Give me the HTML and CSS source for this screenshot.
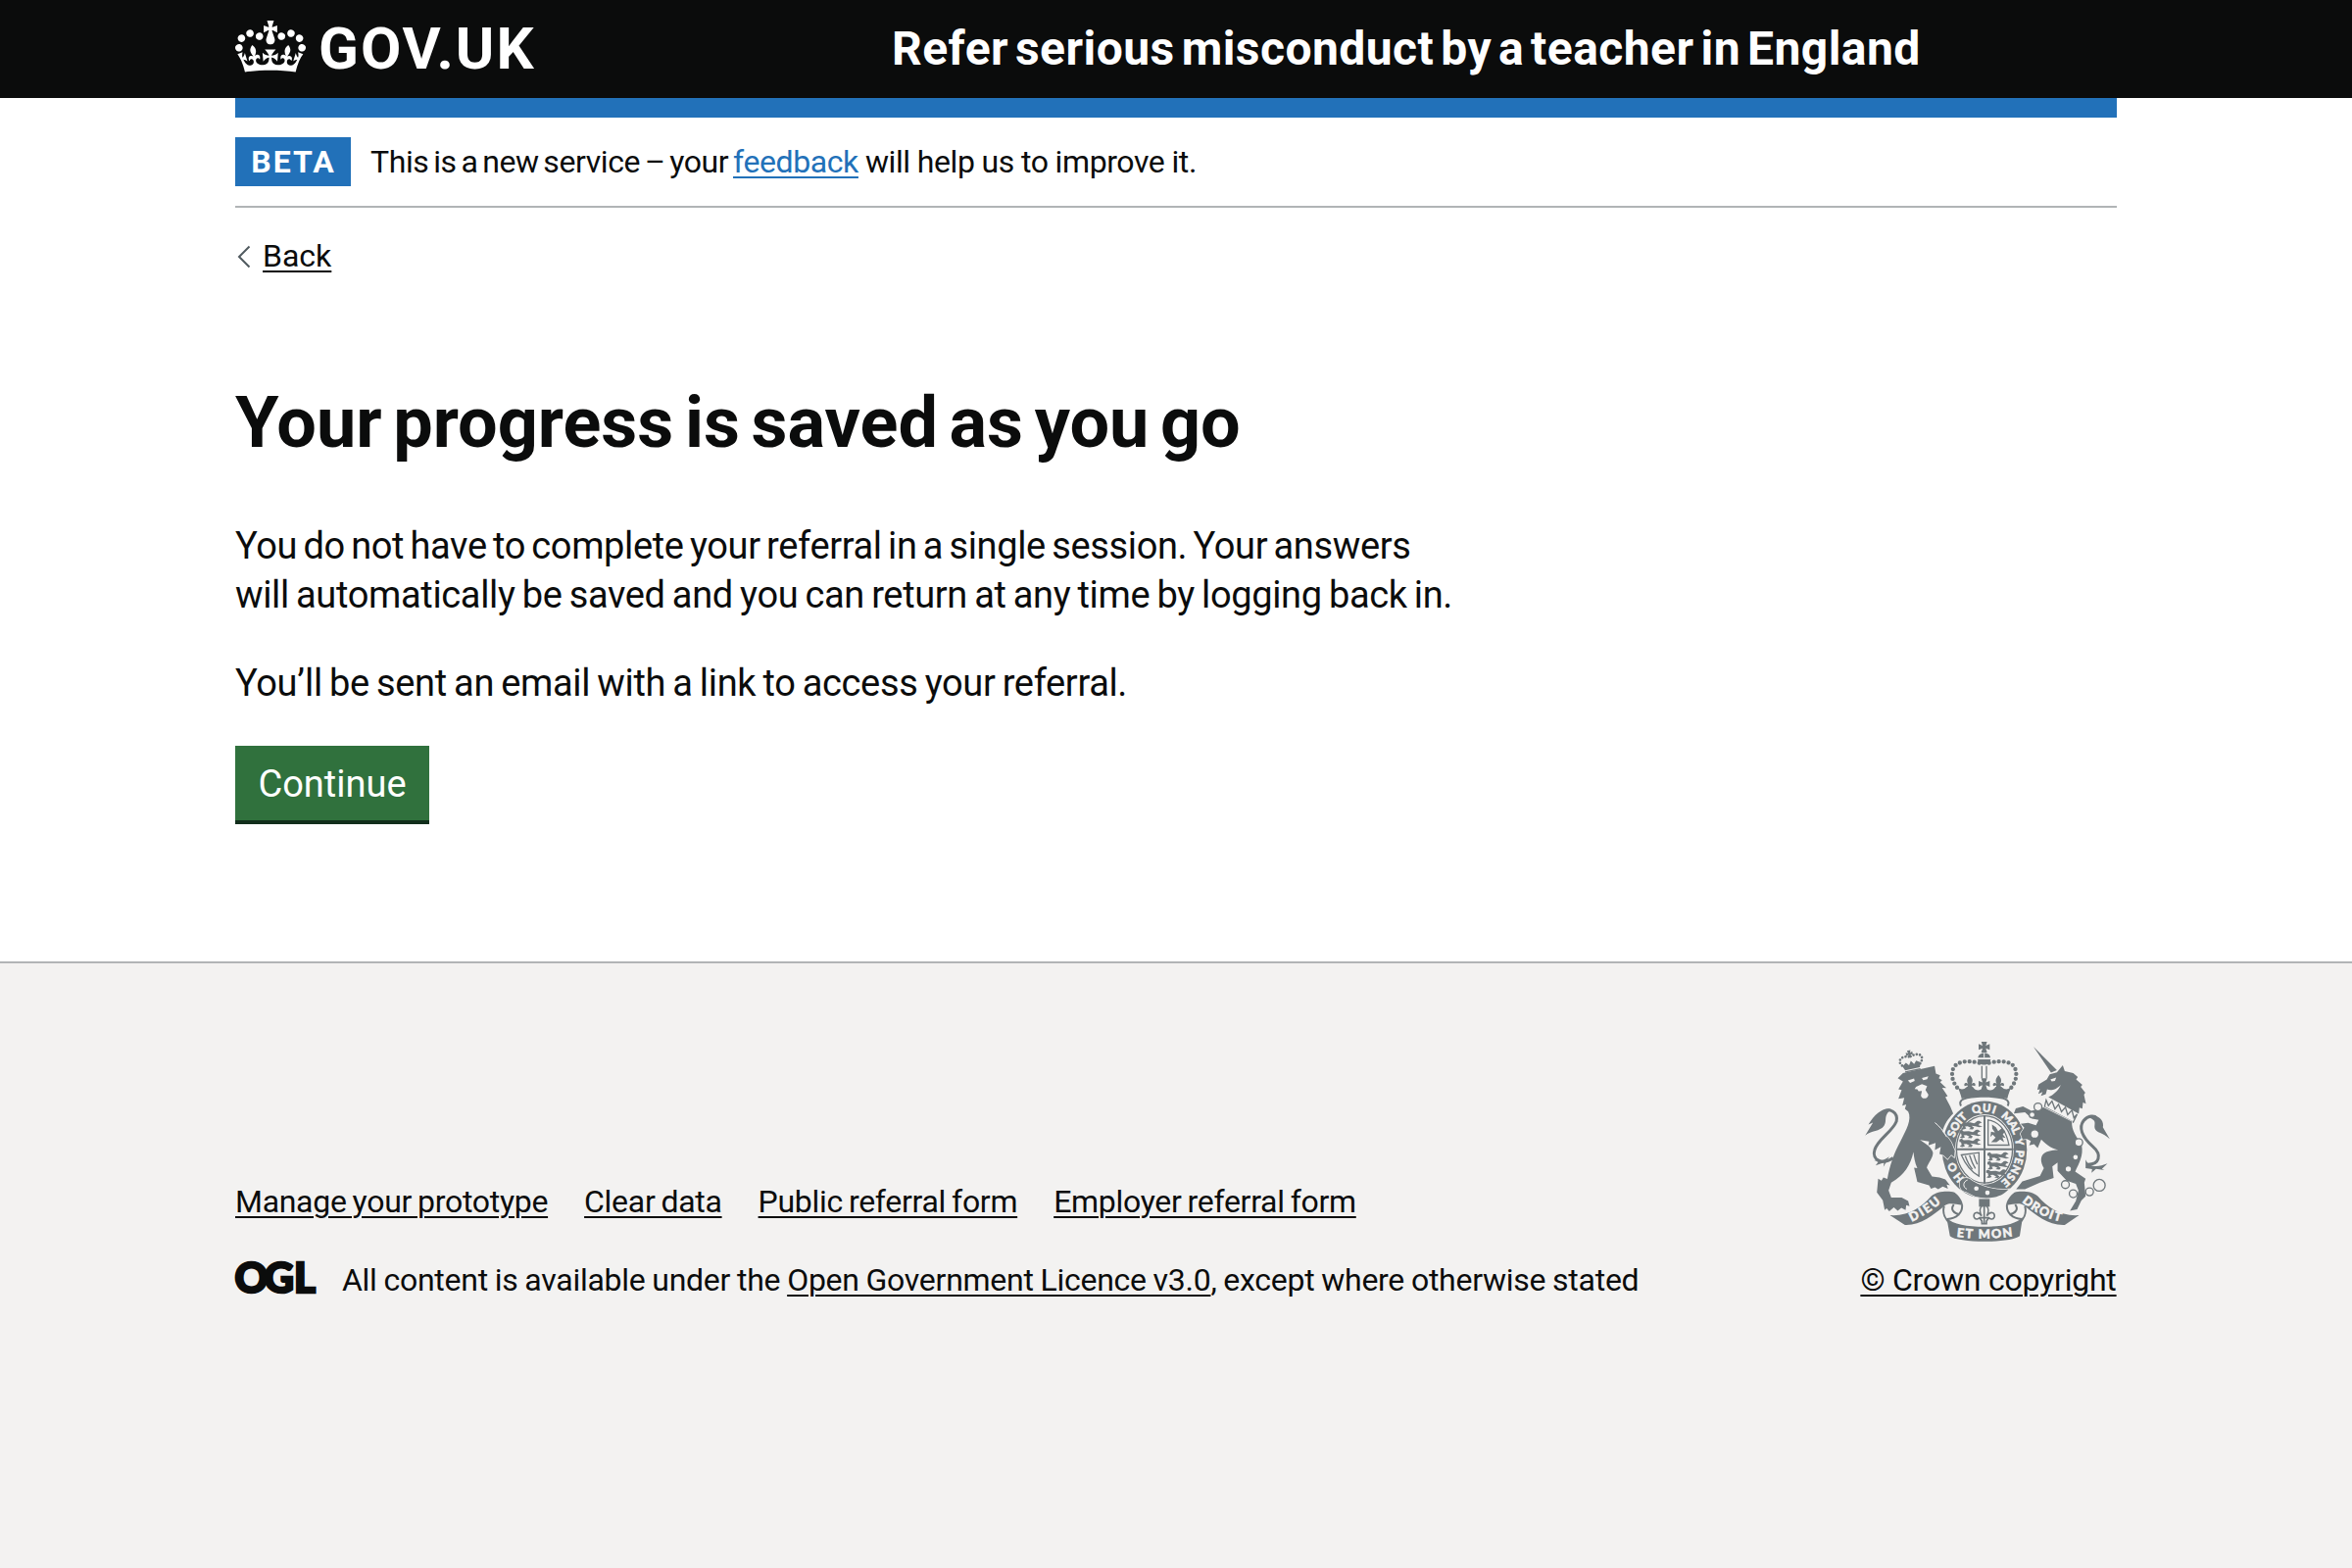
FILE: index.html
```html
<!DOCTYPE html>
<html lang="en">
<head>
<meta charset="utf-8">
<title>Your progress is saved as you go</title>
<link rel="stylesheet" href="styles.css">
</head>
<body>
<header class="header">
  <div class="container header-inner">
    <a class="logo" href="#">
      <svg class="logo-crown" viewBox="0 0 132 97" aria-hidden="true"><path d="M25 30.2c3.5 1.5 7.7-.2 9.1-3.7 1.5-3.6-.2-7.8-3.9-9.2-3.6-1.4-7.6.3-9.1 3.9-1.4 3.5.3 7.5 3.9 9zM9 39.5c3.6 1.5 7.8-.2 9.2-3.7 1.5-3.6-.2-7.8-3.9-9.1-3.6-1.5-7.6.2-9.1 3.8-1.4 3.5.3 7.5 3.8 9zM4.4 57.2c3.5 1.5 7.7-.2 9.1-3.8 1.5-3.6-.2-7.7-3.9-9.1-3.5-1.5-7.6.3-9.1 3.8-1.4 3.5.3 7.6 3.9 9.1zm38.3-21.4c3.5 1.5 7.7-.2 9.1-3.8 1.5-3.6-.2-7.7-3.9-9.1-3.6-1.5-7.6.3-9.1 3.8-1.3 3.6.4 7.7 3.9 9.1zm64.4-5.6c-3.6 1.5-7.8-.2-9.1-3.7-1.5-3.6.2-7.8 3.8-9.2 3.6-1.4 7.7.3 9.2 3.9 1.3 3.5-.4 7.5-3.9 9zm15.9 9.3c-3.6 1.5-7.7-.2-9.1-3.7-1.5-3.6.2-7.8 3.7-9.1 3.6-1.5 7.7.2 9.2 3.8 1.5 3.5-.3 7.5-3.8 9zm4.7 17.7c-3.6 1.5-7.8-.2-9.2-3.8-1.5-3.6.2-7.7 3.9-9.1 3.6-1.5 7.7.3 9.2 3.8 1.3 3.5-.4 7.6-3.9 9.1zM89.3 35.8c-3.6 1.5-7.8-.2-9.2-3.8-1.4-3.6.2-7.7 3.9-9.1 3.6-1.5 7.7.3 9.2 3.8 1.4 3.6-.3 7.7-3.9 9.1zM69.7 17.7l8.9 4.7V9.3l-8.9 2.8c-.2-.3-.5-.6-.9-.9L72.4 0H59.6l3.5 11.2c-.3.3-.6.5-.9.9l-8.8-2.8v13.1l8.8-4.7c.3.3.6.7.9.9l-5 15.4v.1c-.2.8-.4 1.6-.4 2.4 0 4.1 3.1 7.5 7 8.1h.2c.3 0 .7.1 1 .1.4 0 .7 0 1-.1h.2c4-.6 7.1-4.1 7.1-8.1 0-.8-.1-1.7-.4-2.4V34l-5.1-15.4c.4-.2.7-.6 1-.9zM66 92.8c16.9 0 32.8 1.1 47.1 3.2 4-16.9 8.9-26.7 14-33.5l-9.6-3.4c1 4.9 1.1 7.2 0 10.2-1.5-1.4-3-4.3-4.2-8.7L108.6 76c2.8-2 5-3.2 7.5-3.3-4.4 9.4-10 11.9-13.6 11.2-4.3-.8-6.3-4.6-5.6-7.9 1-4.7 5.7-5.9 8-.5 4.3-8.7-3-11.4-7.6-8.8 7.1-7.2 7.9-13.5 2.1-21.1-8 6.1-8.1 12.3-4.5 20.8-4.7-5.4-12.1-2.5-9.5 6.2 3.4-5.2 7.9-2 7.2 3.1-.6 4.3-6.4 7.8-13.5 7.2-10.3-.9-10.9-8-11.2-13.8 2.5-.5 7.1 1.8 11 7.3L80.2 60c-4.1 4.4-8 5.3-12.3 5.4 1.4-4.4 8-11.6 8-11.6H55.5s6.4 7.2 7.9 11.6c-4.2-.1-8-1-12.3-5.4l1.4 16.4c3.9-5.5 8.5-7.7 10.9-7.3-.3 5.8-.9 12.8-11.1 13.8-7.2.6-12.9-2.9-13.5-7.2-.7-5 3.8-8.3 7.1-3.1 2.7-8.7-4.6-11.6-9.4-6.2 3.7-8.5 3.6-14.7-4.6-20.8-5.8 7.6-5 13.9 2.2 21.1-4.7-2.6-11.9.1-7.7 8.8 2.3-5.5 7.1-4.2 8.1.5.7 3.3-1.3 7.1-5.7 7.9-3.5.7-9-1.8-13.5-11.2 2.5.1 4.7 1.3 7.5 3.3l-4.7-15.4c-1.2 4.4-2.7 7.2-4.3 8.7-1.1-3-.9-5.3 0-10.2l-9.5 3.4c5 6.9 9.9 16.7 14 33.5 14.8-2.1 30.8-3.2 47.7-3.2z"/></svg>
      <span class="logo-text">GOV.UK</span>
    </a>
    <a class="service-name" href="#">Refer serious misconduct by a teacher in England</a>
  </div>
</header>

<div class="container">
  <div class="header-bar"></div>
  <div class="phase">
    <strong class="tag">BETA</strong>
    <span class="phase-text"><span class="phase-lead">This is a new service – your </span><a class="link" href="#">feedback</a> will help us to improve it.</span>
  </div>
  <a class="back" href="#">
    <svg class="back-arrow" viewBox="0 0 14 24" aria-hidden="true"><path d="M12.500 1.500L2 12l10.500 10.500"/></svg>
    <span class="back-text">Back</span>
  </a>
  <main class="main">
    <h1 class="heading">Your progress is saved as you go</h1>
    <p class="body-text">You do not have to complete your referral in a single session. Your answers<br><span class="line-two">will automatically be saved and you can return at any time by logging back in.</span></p>
    <p class="body-text line-three">You’ll be sent an email with a link to access your referral.</p>
    <button class="button" type="button">Continue</button>
  </main>
</div>

<footer class="footer">
  <div class="container footer-inner">
    <div class="footer-meta">
      <ul class="footer-links">
        <li><a class="footer-link" href="#">Manage your prototype</a></li>
        <li><a class="footer-link" href="#">Clear data</a></li>
        <li><a class="footer-link" href="#">Public referral form</a></li>
        <li><a class="footer-link" href="#">Employer referral form</a></li>
      </ul>
      <div class="licence">
        <svg class="ogl" viewBox="0 0 82 34" role="img" aria-label="Open Government Licence"><text class="ogl-text" x="-0.500 29.500 60" y="32">OGL</text></svg>
        <span class="licence-text">All content is available under the <a class="footer-link" href="#">Open Government Licence v3.0</a>, except where otherwise stated</span>
      </div>
    </div>
    <div class="copyright">
      <svg class="crest" viewBox="72 42 750 613" aria-hidden="true">
        <defs>
          <path id="garter" d="M438 486A96 115 0 0 1 341 372A97 116 0 0 1 438 257A97 116 0 0 1 535 372A97 116 0 0 1 438 487"/>
          <path id="dieu" d="M215 594Q275 566 320 521"/>
          <path id="droit" d="M552 533Q608 580 674 594"/>
          <path id="etmon" d="M352 640Q438 651 526 638"/>
          <path id="cross" d="M-5-4L-9-17H9L5-4L17-9V9L5 4L9 17H-9L-5 4L-17 9V-9Z"/>
          <path id="fleur" d="M0-20C10-8 10-2 5 8C12 0 20 5 16 14L7 12V20H-7V12L-16 14C-20 5-12 0-5 8C-10-2-10-8 0-20Z"/>
          <path id="passant" d="M-33-10L-26-13L-20-8L-4-9L8-6C16-8 14-15 24-13L32-8L24-5L22 0L34 4L24 6L12 3L0 2L8 8L4 13L-8 12L-2 8L-12 3L-20 4L-16 10L-24 13L-32 11L-26 6L-28-2L-33-3Z"/>
        </defs>

        <!-- royal crown -->
        <use href="#cross" x="437" y="58"/>
        <path d="M418 91C420 72 455 72 456 91ZM417 96H457C455 118 419 118 417 96Z"/>
        <path class="cut" d="M437 76V91"/>
        <path class="beads" d="M422 107C385 98 355 102 343 122C335 140 338 163 355 184M452 107C490 98 520 102 531 122C539 140 536 163 519 184"/>
        <path class="line" d="M430 116V154M444 116V154"/>
        <use href="#cross" x="437" y="171"/>
        <use href="#fleur" x="393" y="164"/><use href="#fleur" x="481" y="164"/>
        <path d="M352 172C358 190 372 192 384 180H402C410 194 426 194 433 182H441C448 194 464 194 472 180H490C502 192 516 190 524 172C516 190 511 204 508 216C460 206 414 206 368 216C365 204 360 190 352 172Z"/>
        <path class="line thick" d="M366 239C356 219 375 212 437 209C500 212 519 219 509 239"/>

        <!-- garter and shield -->
        <ellipse cx="438" cy="373" rx="130" ry="149"/>
        <ellipse class="paper" cx="438" cy="372" rx="90" ry="108"/>
        <ellipse class="line" cx="438" cy="372" rx="86" ry="103"/>
        <path class="line thick" d="M438 267V477M350 372H527"/>
        <use href="#passant" x="398" y="298"/><use href="#passant" x="394" y="325"/><use href="#passant" x="394" y="352"/>
        <use href="#passant" x="480" y="394"/><use href="#passant" x="480" y="421"/><use href="#passant" x="476" y="447"/>
        <path class="line" d="M449 282Q500 290 513 359H449Z"/>
        <path d="M461 296L473 304L480 316L491 307L502 316L494 326L503 337L493 335L498 350L486 342L475 350H458L472 336L463 327L456 334L458 318L470 320L462 309Z"/>
        <path class="line" d="M367 389L421 382V454Q386 434 367 389ZM379 392Q388 418 401 433M392 390Q400 415 410 431M405 388Q410 406 416 418"/>
        <path d="M460 479L492 462L510 448L530 450L504 488Z"/>
        <g class="motto">
          <text><textPath href="#garter" startOffset="68" textLength="60">HO</textPath></text>
          <text><textPath href="#garter" startOffset="202" textLength="75">SOIT</textPath></text>
          <text><textPath href="#garter" startOffset="296" textLength="68">QUI</textPath></text>
          <text><textPath href="#garter" startOffset="384" textLength="70">MAL</textPath></text>
          <text><textPath href="#garter" startOffset="466">Y</textPath></text>
          <text><textPath href="#garter" startOffset="500" textLength="112">PENSE</textPath></text>
        </g>
        <path class="edged" d="M363 470C372 455 392 458 400 468C440 492 480 497 512 494C490 520 450 526 410 517L380 502C362 500 360 480 363 470Z"/>
        <path class="cut" d="M386 466C372 470 370 488 384 494"/>
        <circle class="paper" cx="413" cy="492" r="7"/><circle class="paper" cx="447" cy="505" r="7"/>

        <!-- lion -->
        <path class="edged" d="M172 154L188 138L285 116L289 140L302 145L298 154L308 160L302 166L321 184L308 183L325 209L318 212L333 240L342 262C326 278 314 296 309 318L326 336L336 350L347 376L345 396L336 388L325 402L312 390L300 386L304 364L286 374L288 352L266 360L268 348L240 343C256 352 278 368 280 382C280 398 266 412 261 428L277 455L300 458L318 464L332 482L322 480L326 493L310 486L296 494L286 488L274 493L268 482L232 472L222 428L232 430C224 412 222 396 220 380C212 418 192 452 152 474L144 498L152 520L184 520L204 530L208 546L198 543L196 558L183 551L172 560L160 550L146 562L138 553L132 558L126 528L108 504L112 462L122 468L128 458L140 463C148 420 160 384 182 344C198 312 216 280 204 256L194 248L198 234L186 238L192 214L174 217L184 190L174 188L188 164Z"/>
        <path class="paper" d="M203 161L222 155L224 162L210 168ZM246 153L266 148L262 157L250 160ZM228 180L246 172L262 178L257 190L266 204C264 219 246 219 243 207L246 193L236 194L232 188L224 187Z"/>
        <path class="cut" d="M286 290C298 300 312 314 322 334"/>
        <path class="tail" d="M158 398C124 422 92 404 101 374C110 341 154 320 168 286C174 258 147 243 126 258"/>
        <path d="M152 249C126 244 102 263 82 296L96 290L72 330C90 314 118 318 130 300C141 281 126 270 152 249ZM88 401C106 411 128 408 146 394L128 426L130 412L104 421L112 411Z"/>
        <g transform="rotate(-12 214 100)">
          <path class="beads small" d="M190 116C166 98 182 76 210 87M214 87C246 76 258 98 236 116"/>
          <use href="#cross" transform="translate(212 78) scale(.6)"/>
          <path d="M184 111L196 103L204 112L212 100L220 112L228 103L240 111L235 125H189Z"/>
          <path class="line" d="M188 130H236"/>
        </g>

        <!-- unicorn -->
        <path d="M588 57L660 129L642 137Z"/>
        <path d="M600 189L604 173L629 158L638 142L660 136L678 114L684 132L710 138L724 150L719 158L738 174L733 180L747 198L743 204L749 232L740 228L738 247L729 244L727 263L686 240L634 212C650 204 664 192 672 174C654 192 640 192 630 188L626 203L611 208L616 196L603 202L608 188Z"/>
        <path class="paper" d="M640 158L658 152L654 162L644 164Z"/>
        <path class="line" d="M627 221L634 238L645 224L654 248L665 234L674 257L686 243L693 266L706 252L712 275L722 264L710 289L622 242Z"/>
        <path class="edged" d="M619 243L706 287C704 315 722 334 736 360C742 390 728 416 716 440L748 462L744 474L748 516L735 529L722 556L700 560L718 530L726 498L718 478L690 468L662 438V412L646 424L650 460L608 474L562 494H535L554 470L608 454L620 430C600 392 618 374 664 374C638 368 624 354 612 342L601 368L590 356L575 360L580 346L568 340L555 342L548 324L560 306L549 294L572 291L596 298L604 282L584 278L562 258L528 262L534 246L556 240L582 254Z"/>
        <path class="tail" d="M752 418C790 420 800 389 770 363C736 333 726 304 742 284C756 267 776 268 782 276"/>
        <path d="M758 274C788 260 806 286 801 304L822 340C800 318 782 324 776 307C774 292 784 284 758 274ZM748 403C760 430 788 426 815 415L798 432L806 436L780 432L766 444L768 433L748 430Z"/>
        <g class="chain">
          <circle cx="602" cy="242" r="12"/><circle cx="584" cy="266" r="9"/><circle cx="592" cy="325" r="13"/>
          <circle cx="727" cy="351" r="12"/><circle cx="717" cy="396" r="9"/><circle cx="695" cy="432" r="10"/>
          <circle cx="686" cy="480" r="12"/><circle cx="710" cy="508" r="12"/><circle cx="760" cy="502" r="12"/><circle cx="790" cy="482" r="18"/>
        </g>

        <!-- fleur badge -->
        <path d="M421 524H454V548H421Z"/>
        <path class="line badge" d="M437 539C456 552 450 566 445 576C455 561 472 564 468 580C464 590 454 585 451 582L444 592V600H430V592L423 582C420 585 410 590 406 580C402 564 419 561 429 576C424 566 418 552 437 539ZM423 582H451M437 545V600"/>

        <!-- ribbon -->
        <path class="edged" d="M148 574C206 578 246 548 274 516C292 499 330 499 346 504C362 516 370 530 372 544C344 540 330 534 314 546C280 574 242 606 194 604Z"/>
        <path class="edged" d="M728 574C670 578 630 548 602 516C584 499 546 499 530 504C514 516 506 530 504 544C532 540 546 534 562 546C596 574 634 606 684 604Z"/>
        <path class="line thick" d="M314 546C308 568 318 588 334 600M369 542C372 566 352 584 324 586M344 541C332 556 344 568 362 572M562 546C568 568 558 588 542 600M507 542C504 566 524 584 552 586M532 541C544 556 532 568 514 572"/>
        <path d="M322 582C340 602 386 609 437 609C490 609 536 602 555 580L546 638C520 660 354 660 332 638Z"/>
        <g class="motto large">
          <text><textPath href="#dieu" textLength="108">DIEU</textPath></text>
          <text><textPath href="#droit" textLength="134">DROIT</textPath></text>
          <text><textPath href="#etmon" textLength="173">ET MON</textPath></text>
        </g>
      </svg>
      <a class="footer-link link-crown" href="#">© Crown copyright</a>
    </div>
  </div>
</footer>
</body>
</html>
```
FILE: styles.css
```css
* { box-sizing: border-box; }

html { background: #f3f2f1; }

body {
  margin: 0;
  background: #fff;
  color: #0b0c0c;
  font-family: Roboto, "Liberation Sans", sans-serif;
  font-size: 32px;
  line-height: 40px;
}

a {
  color: inherit;
  text-decoration-thickness: 2px;
  text-underline-offset: 4px;
}

.container {
  width: 1920px;
  margin: 0 auto;
}

/* Header */
.header {
  height: 100px;
  background: #0b0c0c;
  color: #fff;
}

.header-inner {
  display: grid;
  grid-template-columns: 670px 1fr;
}

.logo {
  display: flex;
  gap: 13px;
  padding-top: 21px;
  text-decoration: none;
}

.logo-crown {
  width: 72px;
  height: 53px;
  fill: #fff;
}

.logo-text {
  font-size: 60px;
  line-height: 58px;
  font-weight: 700;
  letter-spacing: 2px;
}

.service-name {
  padding-top: 20px;
  font-size: 48px;
  line-height: 60px;
  font-weight: 700;
  letter-spacing: 0.45px;
  word-spacing: -5.4px;
  text-decoration: none;
  white-space: nowrap;
}

.header-bar {
  height: 20px;
  background: #2271b9;
}

/* Phase banner */
.phase {
  display: flex;
  gap: 20px;
  height: 92px;
  padding: 20px 0;
  border-bottom: 2px solid #b1b4b6;
}

.tag {
  width: 118px;
  height: 50px;
  padding: 5px 0 5px 1px;
  background: #2271b9;
  color: #fff;
  font-weight: 700;
  letter-spacing: 2px;
  text-align: center;
}

.phase-text {
  padding-top: 5px;
  letter-spacing: -0.4px;
  word-spacing: -0.5px;
  white-space: nowrap;
}

.phase-lead { word-spacing: -2.8px; }

.link { color: #2271b9; }

/* Back link */
.back {
  display: flex;
  width: max-content;
  margin-top: 29px;
  text-decoration: none;
}

.back-arrow {
  width: 14px;
  height: 24px;
  margin: 9px 12px 0 2px;
  fill: none;
  stroke: #505a5f;
  stroke-width: 2;
}

.back-text {
  text-decoration: underline;
  text-decoration-thickness: 2px;
  text-underline-offset: 4px;
}

/* Main content */
.main {
  height: 700px;
  padding-top: 111px;
}

.heading {
  margin: 0 0 60px;
  font-size: 72px;
  line-height: 80px;
  font-weight: 700;
  word-spacing: -6.3px;
}

.body-text {
  margin: 0 0 40px;
  font-size: 38px;
  line-height: 50px;
  letter-spacing: -0.35px;
  word-spacing: -2.8px;
  white-space: nowrap;
}

.line-two { word-spacing: -1.9px; }

.line-three {
  margin-bottom: 39px;
  word-spacing: -1.85px;
}

.button {
  width: 198px;
  height: 76px;
  padding: 0;
  border: 0;
  background: #30713d;
  box-shadow: 0 4px 0 #122e1c;
  color: #fff;
  font-family: inherit;
  font-size: 38px;
  line-height: 78px;
}

/* Footer */
.footer {
  height: 619px;
  padding-top: 80px;
  border-top: 2px solid #b1b4b6;
  background: #f3f2f1;
}

.footer-inner {
  display: flex;
  justify-content: space-between;
  align-items: flex-end;
  height: 263px;
}

.footer-links {
  display: flex;
  gap: 37px;
  margin: 0 0 40px;
  padding: 0;
  list-style: none;
  white-space: nowrap;
  letter-spacing: -0.3px;
  word-spacing: -1.6px;
}

.licence { display: flex; }

.ogl {
  width: 82px;
  height: 34px;
  margin: 1px 27px 0 0;
  overflow: visible;
}

.ogl-text {
  fill: #0b0c0c;
  stroke: #0b0c0c;
  stroke-width: 2.5;
  font-family: Lato, sans-serif;
  font-size: 42px;
  font-weight: 900;
}

.licence-text {
  letter-spacing: -0.27px;
  word-spacing: -0.8px;
  white-space: nowrap;
}

.copyright {
  display: flex;
  flex-direction: column;
  align-items: center;
  width: 262px;
  white-space: nowrap;
}

.link-crown { letter-spacing: -0.22px; }

.crest {
  width: 250px;
  height: 204px;
  margin: 0 3px 19px 0;
  fill: #6f777b;
}

.crest .line { fill: none; stroke: #6f777b; stroke-width: 4; }
.crest .thick { stroke-width: 6; }
.crest .badge { stroke-width: 5; }
.crest .tail { fill: none; stroke: #6f777b; stroke-width: 9; }
.crest .paper { fill: #f3f2f1; }
.crest .cut { fill: none; stroke: #f3f2f1; stroke-width: 3; }
.crest .edged { stroke: #f3f2f1; stroke-width: 4; paint-order: stroke; }
.crest .beads {
  fill: none;
  stroke: #6f777b;
  stroke-width: 13;
  stroke-linecap: round;
  stroke-dasharray: 0 15;
}
.crest .small { stroke-width: 8; stroke-dasharray: 0 10; }
.crest .chain { fill: #f3f2f1; stroke: #6f777b; stroke-width: 4; }

.motto {
  fill: #f3f2f1;
  stroke: #f3f2f1;
  stroke-width: 1.5;
  font-family: Lato, sans-serif;
  font-size: 34px;
  font-weight: 900;
}

.motto.large { font-size: 38px; }
```
